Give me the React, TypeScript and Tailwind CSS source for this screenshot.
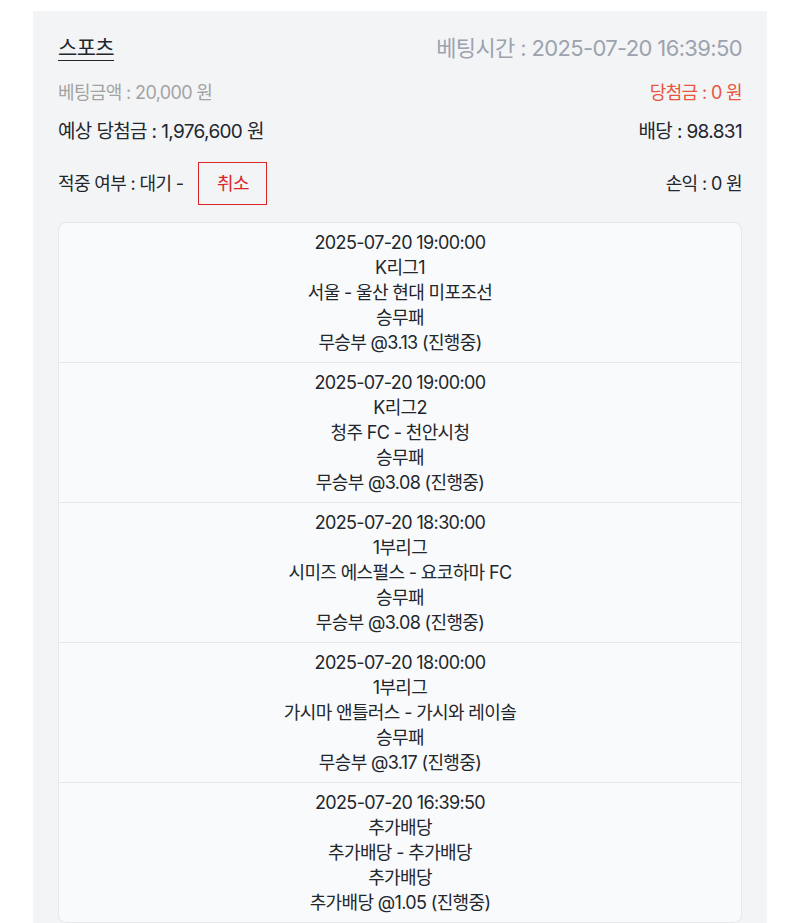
import React from "react";

const items = [
  ["2025-07-20 19:00:00", "K리그1", "서울 - 울산 현대 미포조선", "승무패", "무승부 @3.13 (진행중)"],
  ["2025-07-20 19:00:00", "K리그2", "청주 FC - 천안시청", "승무패", "무승부 @3.08 (진행중)"],
  ["2025-07-20 18:30:00", "1부리그", "시미즈 에스펄스 - 요코하마 FC", "승무패", "무승부 @3.08 (진행중)"],
  ["2025-07-20 18:00:00", "1부리그", "가시마 앤틀러스 - 가시와 레이솔", "승무패", "무승부 @3.17 (진행중)"],
  ["2025-07-20 16:39:50", "추가배당", "추가배당 - 추가배당", "추가배당", "추가배당 @1.05 (진행중)"],
];

export default function App() {
  return (
    <div
      className="min-h-[923px] bg-white pt-[11px] px-[33px] text-[#22262d]"
      style={{ fontFamily: '"Inter", "Noto Sans CJK KR", sans-serif' }}
    >
      <div className="bg-[#f3f4f6] px-[25px] pt-[23px] pb-[20px] tracking-[-0.04em]">
        <div className="flex justify-between items-center h-[28px]">
          <span className="text-[21px] underline underline-offset-[5px] decoration-1">스포츠</span>
          <span className="text-[22px] text-[#9ca3af]">베팅시간 : 2025-07-20 16:39:50</span>
        </div>
        <div className="mt-[17px] flex justify-between items-center h-[26px] text-[18px]">
          <span className="text-[#a3a3a3]">베팅금액 : 20,000 원</span>
          <span className="text-[#e8553e]">당첨금 : 0 원</span>
        </div>
        <div className="mt-[14px] flex justify-between items-center h-[26px] text-[19px]">
          <span>예상 당첨금 : 1,976,600 원</span>
          <span>배당 : 98.831</span>
        </div>
        <div className="mt-[17px] flex justify-between items-center h-[43px] text-[18px]">
          <div className="flex items-center">
            <span>적중 여부 : 대기 -</span>
            <button className="ml-[15px] w-[69px] h-[43px] border border-[#dc2626] text-[#dc2626] text-[18px]">
              취소
            </button>
          </div>
          <span>손익 : 0 원</span>
        </div>
        <div className="mt-[17px] border border-[#e5e7eb] rounded-lg bg-[#f9fafb]">
          {items.map((it, i) => (
            <div
              key={i}
              className={`pt-[7px] pb-[7px] text-center text-[18px] leading-[25px] ${
                i < items.length - 1 ? "border-b border-[#e5e7eb]" : ""
              }`}
            >
              {it.map((l, j) => (
                <div key={j}>{l}</div>
              ))}
            </div>
          ))}
        </div>
      </div>
    </div>
  );
}
